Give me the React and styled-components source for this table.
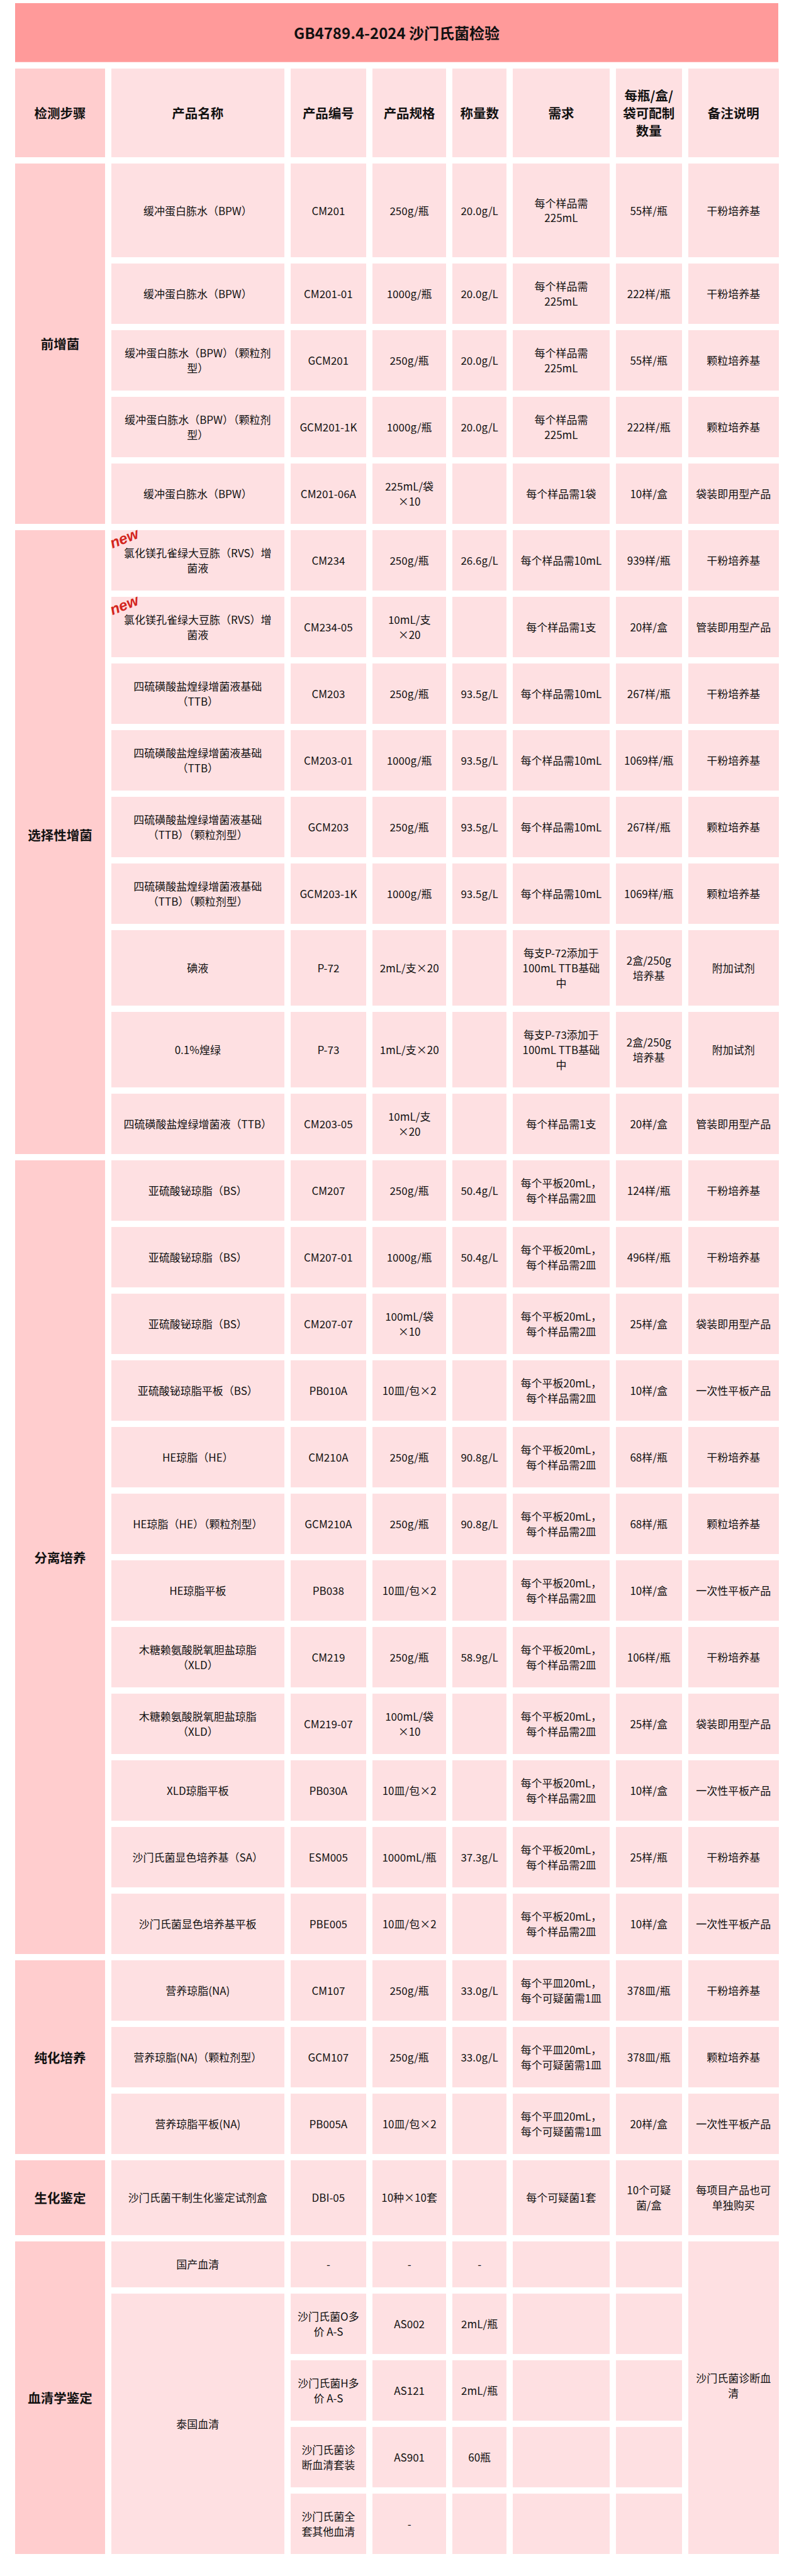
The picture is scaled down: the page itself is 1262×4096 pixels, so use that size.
import React from 'react';
import styled, { createGlobalStyle } from 'styled-components';

const TITLE_BG = '#ff9a9a';
const KEY_BG = '#ffcdce';
const CELL_BG = '#fee0e2';

const GlobalStyle = createGlobalStyle`
  html, body {
    margin: 0;
    padding: 0;
    background: #fff;
  }
  body {
    font-family: "Noto Sans CJK SC", "Noto Sans", sans-serif;
    color: #111;
  }
`;

const COLS = [142.8, 273.7, 120.2, 116.6, 85.8, 153.0, 104.8, 143.3];
const HEADERS = ['检测步骤', '产品名称', '产品编号', '产品规格', '称量数', '需求', '每瓶/盒/\n袋可配制\n数量', '备注说明'];

const NEED_225 = '每个样品需\n225mL';
const PLATE = '每个平板20mL，\n每个样品需2皿';
const DISH = '每个平皿20mL，\n每个可疑菌需1皿';
const RVS = '氯化镁孔雀绿大豆胨（RVS）增\n菌液';
const TTB = '四硫磺酸盐煌绿增菌液基础\n（TTB）';
const TTB_G = '四硫磺酸盐煌绿增菌液基础\n（TTB）（颗粒剂型）';
const BPW = '缓冲蛋白胨水（BPW）';
const BPW_G = '缓冲蛋白胨水（BPW）（颗粒剂\n型）';
const XLD = '木糖赖氨酸脱氧胆盐琼脂\n（XLD）';

const sections = [
  {
    label: '前增菌',
    rows: [
      [149.5, BPW, 'CM201', '250g/瓶', '20.0g/L', NEED_225, '55样/瓶', '干粉培养基'],
      [96, BPW, 'CM201-01', '1000g/瓶', '20.0g/L', NEED_225, '222样/瓶', '干粉培养基'],
      [96, BPW_G, 'GCM201', '250g/瓶', '20.0g/L', NEED_225, '55样/瓶', '颗粒培养基'],
      [96, BPW_G, 'GCM201-1K', '1000g/瓶', '20.0g/L', NEED_225, '222样/瓶', '颗粒培养基'],
      [96, BPW, 'CM201-06A', '225mL/袋\n×10', '', '每个样品需1袋', '10样/盒', '袋装即用型产品'],
    ],
  },
  {
    label: '选择性增菌',
    lift: 24,
    rows: [
      [96, { t: RVS, isNew: true }, 'CM234', '250g/瓶', '26.6g/L', '每个样品需10mL', '939样/瓶', '干粉培养基'],
      [96, { t: RVS, isNew: true }, 'CM234-05', '10mL/支\n×20', '', '每个样品需1支', '20样/盒', '管装即用型产品'],
      [96, TTB, 'CM203', '250g/瓶', '93.5g/L', '每个样品需10mL', '267样/瓶', '干粉培养基'],
      [96, TTB, 'CM203-01', '1000g/瓶', '93.5g/L', '每个样品需10mL', '1069样/瓶', '干粉培养基'],
      [96, TTB_G, 'GCM203', '250g/瓶', '93.5g/L', '每个样品需10mL', '267样/瓶', '颗粒培养基'],
      [96, TTB_G, 'GCM203-1K', '1000g/瓶', '93.5g/L', '每个样品需10mL', '1069样/瓶', '颗粒培养基'],
      [119.7, '碘液', 'P-72', '2mL/支×20', '', '每支P-72添加于\n100mL TTB基础\n中', '2盒/250g\n培养基', '附加试剂'],
      [119.7, '0.1%煌绿', 'P-73', '1mL/支×20', '', '每支P-73添加于\n100mL TTB基础\n中', '2盒/250g\n培养基', '附加试剂'],
      [96, '四硫磺酸盐煌绿增菌液（TTB）', 'CM203-05', '10mL/支\n×20', '', '每个样品需1支', '20样/盒', '管装即用型产品'],
    ],
  },
  {
    label: '分离培养',
    rows: [
      [96, '亚硫酸铋琼脂（BS）', 'CM207', '250g/瓶', '50.4g/L', PLATE, '124样/瓶', '干粉培养基'],
      [96, '亚硫酸铋琼脂（BS）', 'CM207-01', '1000g/瓶', '50.4g/L', PLATE, '496样/瓶', '干粉培养基'],
      [96, '亚硫酸铋琼脂（BS）', 'CM207-07', '100mL/袋\n×10', '', PLATE, '25样/盒', '袋装即用型产品'],
      [96, '亚硫酸铋琼脂平板（BS）', 'PB010A', '10皿/包×2', '', PLATE, '10样/盒', '一次性平板产品'],
      [96, 'HE琼脂（HE）', 'CM210A', '250g/瓶', '90.8g/L', PLATE, '68样/瓶', '干粉培养基'],
      [96, 'HE琼脂（HE）（颗粒剂型）', 'GCM210A', '250g/瓶', '90.8g/L', PLATE, '68样/瓶', '颗粒培养基'],
      [96, 'HE琼脂平板', 'PB038', '10皿/包×2', '', PLATE, '10样/盒', '一次性平板产品'],
      [96, XLD, 'CM219', '250g/瓶', '58.9g/L', PLATE, '106样/瓶', '干粉培养基'],
      [96, XLD, 'CM219-07', '100mL/袋\n×10', '', PLATE, '25样/盒', '袋装即用型产品'],
      [96, 'XLD琼脂平板', 'PB030A', '10皿/包×2', '', PLATE, '10样/盒', '一次性平板产品'],
      [96, '沙门氏菌显色培养基（SA）', 'ESM005', '1000mL/瓶', '37.3g/L', PLATE, '25样/瓶', '干粉培养基'],
      [96, '沙门氏菌显色培养基平板', 'PBE005', '10皿/包×2', '', PLATE, '10样/盒', '一次性平板产品'],
    ],
  },
  {
    label: '纯化培养',
    rows: [
      [96, '营养琼脂(NA)', 'CM107', '250g/瓶', '33.0g/L', DISH, '378皿/瓶', '干粉培养基'],
      [96, '营养琼脂(NA)（颗粒剂型）', 'GCM107', '250g/瓶', '33.0g/L', DISH, '378皿/瓶', '颗粒培养基'],
      [96, '营养琼脂平板(NA)', 'PB005A', '10皿/包×2', '', DISH, '20样/盒', '一次性平板产品'],
    ],
  },
  {
    label: '生化鉴定',
    rows: [
      [119.2, '沙门氏菌干制生化鉴定试剂盒', 'DBI-05', '10种×10套', '', '每个可疑菌1套', '10个可疑\n菌/盒', '每项目产品也可\n单独购买'],
    ],
  },
  {
    label: '血清学鉴定',
    rows: [
      [72.9, '国产血清', '-', '-', '-', '', '', { t: '沙门氏菌诊断血\n清', rowSpan: 5, lift: 38 }],
      [96, { t: '泰国血清', rowSpan: 4 }, '沙门氏菌O多\n价 A-S', 'AS002', '2mL/瓶', '', ''],
      [96, '沙门氏菌H多\n价 A-S', 'AS121', '2mL/瓶', '', ''],
      [96, '沙门氏菌诊\n断血清套装', 'AS901', '60瓶', '', ''],
      [96, '沙门氏菌全\n套其他血清', '-', '', '', ''],
    ],
  },
];

const Page = styled.div`
  width: 1262px;
  padding-top: 5px;
`;

const Title = styled.h1`
  box-sizing: border-box;
  margin: 0 0 0 24px;
  width: 1213px;
  height: 94px;
  display: flex;
  align-items: center;
  justify-content: center;
  background: ${TITLE_BG};
  border-bottom: 1px solid #ffb9b9;
  font-size: 24px;
  font-weight: 700;
  color: #111;
`;

const Table = styled.table`
  margin-left: 13.8px;
  width: 1233.8px;
  table-layout: fixed;
  border-collapse: separate;
  border-spacing: 10.3px 10.8px;
`;

const Col = styled.col`
  width: ${(p) => p.$w}px;
`;

const Row = styled.tr`
  height: ${(p) => p.$h}px;
`;

const HeadCell = styled.th`
  background: ${(p) => (p.$key ? KEY_BG : CELL_BG)};
  padding: 0 4px;
  font-size: 20.5px;
  font-weight: 700;
  line-height: 28px;
  white-space: pre-line;
  text-align: center;
  vertical-align: middle;
`;

const StepCell = styled.th`
  background: ${KEY_BG};
  padding: 0 4px ${(p) => p.$lift || 0}px;
  font-size: 20.5px;
  font-weight: 700;
  line-height: 28px;
  text-align: center;
  vertical-align: middle;
`;

const Cell = styled.td`
  position: relative;
  background: ${CELL_BG};
  padding: 0 4px ${(p) => p.$lift || 0}px;
  font-size: 17px;
  line-height: 1.4;
  white-space: pre-line;
  text-align: center;
  vertical-align: middle;
`;

const NewTag = styled.span`
  position: absolute;
  left: -3px;
  top: 1px;
  font-family: "Liberation Sans", Arial, sans-serif;
  font-size: 24px;
  font-weight: 700;
  font-style: italic;
  line-height: 1;
  color: #d4251d;
  transform: rotate(-22deg);
  pointer-events: none;
`;

const renderCell = (c, i) => {
  const cell = typeof c === 'string' ? { t: c } : c;
  return (
    <Cell key={i} rowSpan={cell.rowSpan} $lift={cell.lift}>
      {cell.isNew && <NewTag>new</NewTag>}
      {cell.t}
    </Cell>
  );
};

const App = () => {
  return (
    <Page>
      <GlobalStyle />
      <Title>GB4789.4-2024 沙门氏菌检验</Title>
      <Table>
        <colgroup>
          {COLS.map((w, i) => (
            <Col key={i} $w={w} />
          ))}
        </colgroup>
        <tbody>
          <Row $h={140.7}>
            {HEADERS.map((h, i) => (
              <HeadCell key={h} $key={i === 0}>
                {h}
              </HeadCell>
            ))}
          </Row>
          {sections.map((sec) =>
            sec.rows.map(([h, ...cells], ri) => (
              <Row key={sec.label + ri} $h={h}>
                {ri === 0 && (
                  <StepCell rowSpan={sec.rows.length} $lift={sec.lift}>
                    {sec.label}
                  </StepCell>
                )}
                {cells.map(renderCell)}
              </Row>
            ))
          )}
        </tbody>
      </Table>
    </Page>
  );
};

export default App;
